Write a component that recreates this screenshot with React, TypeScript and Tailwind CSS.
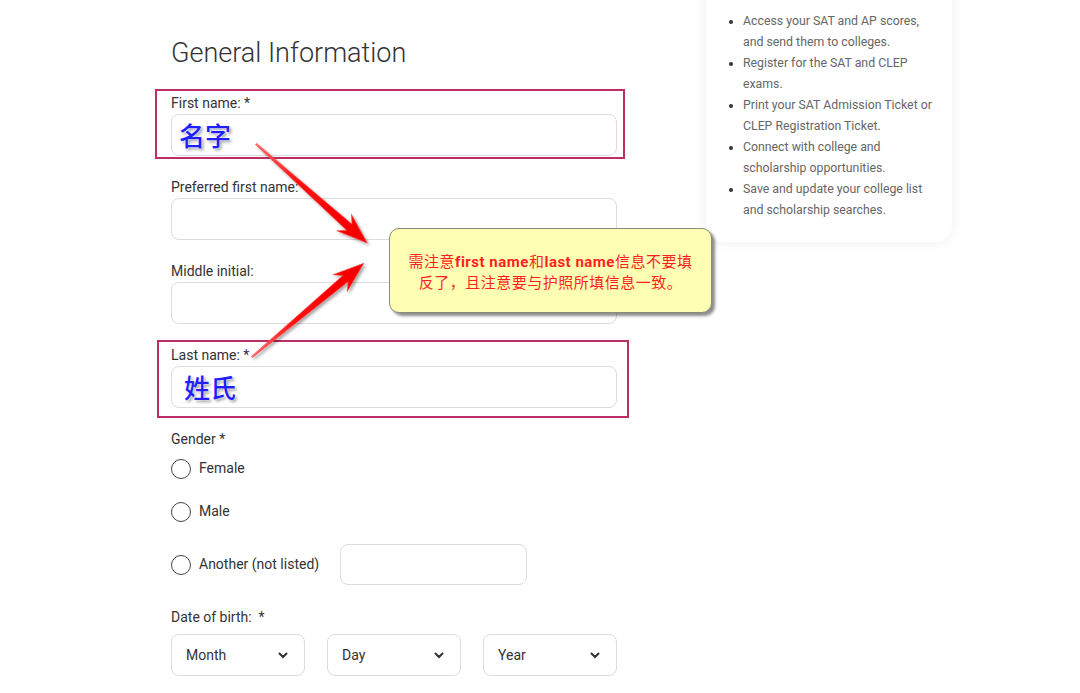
import { ReactNode } from "react";

const cjk = "font-['Noto_Sans_CJK_SC',sans-serif]";

// blue handwritten-style hint that sits inside the highlighted inputs
const Hint = ({ text, pad }: { text: string; pad: string }) => (
  <span
    className={`${cjk} ${pad} text-[26px] font-medium leading-[40px] text-[#1f1fff] [text-shadow:0_0_1px_#fff,0_0_2px_#fff,2px_2px_3px_#9a9a9a]`}
  >
    {text}
  </span>
);

type FieldProps = {
  label: string;
  children?: ReactNode;
  mark?: string;
};

const Field = ({ label, children, mark }: FieldProps) => (
  <div className="relative mb-[21px]">
    {mark && <div className={`pointer-events-none absolute border-2 border-[#bd2f64] ${mark}`} />}
    <label className="block text-[14px] leading-[20px] text-[#333]">{label}</label>
    <div className="mt-[1px] flex h-[42px] items-center rounded-lg border border-[#dcdcdc] bg-white">
      {children}
    </div>
  </div>
);

const Radio = ({ label, children }: { label: string; children?: ReactNode }) => (
  <div className="flex items-center">
    <span className="h-[20px] w-[20px] rounded-full border-[1.5px] border-[#444]" />
    <span className="ml-[8px] text-[14px] text-[#333]">{label}</span>
    {children}
  </div>
);

const Select = ({ label }: { label: string }) => (
  <div className="flex h-[42px] w-[134px] items-center justify-between rounded-lg border border-[#dcdcdc] pl-[14px] pr-[16px] text-[14px] text-[#333]">
    <span>{label}</span>
    <svg width="10" height="7" viewBox="0 0 10 7">
      <path d="M1.5 1.5l3.5 3.5 3.5-3.5" fill="none" stroke="#333" strokeWidth="2" strokeLinecap="round" />
    </svg>
  </div>
);

// tapered red pointer, drawn pointing right then rotated into place
const Arrow = ({ x, y, angle, len }: { x: number; y: number; angle: number; len: number }) => {
  const pts = `0,-0.8 ${len - 24},-4 ${len - 31},-11 ${len},0 ${len - 31},11 ${len - 24},4 0,0.8`;
  return (
    <g transform={`translate(${x} ${y}) rotate(${angle})`}>
      <polygon points={pts} fill="url(#arrowFill)" stroke="#ff4a4a" strokeWidth="0.6" strokeLinejoin="round" />
    </g>
  );
};

const perks = [
  ["Access your SAT and AP scores,", "and send them to colleges."],
  ["Register for the SAT and CLEP", "exams."],
  ["Print your SAT Admission Ticket or", "CLEP Registration Ticket."],
  ["Connect with college and", "scholarship opportunities."],
  ["Save and update your college list", "and scholarship searches."],
];

const App = () => {
  return (
    <div className="relative h-[693px] w-full overflow-hidden bg-white font-['Roboto',sans-serif]">
      <div className="flex">
        <main className="ml-[171px] w-[446px] pt-[36px]">
          <h2 className="text-[27px] font-light leading-[34px] text-[#333]">General Information</h2>

          <div className="mt-[23px]">
            <Field label="First name: *" mark="-left-[16px] -top-[4px] -right-[8px] -bottom-[3px]">
              <Hint text="名字" pad="pl-[7px]" />
            </Field>
            <Field label="Preferred first name:" />
            <Field label="Middle initial:" />
            <Field label="Last name: *" mark="-left-[14px] -top-[5px] -right-[12px] -bottom-[10px]">
              <Hint text="姓氏" pad="pl-[12px]" />
            </Field>
          </div>

          <div className="text-[14px] leading-[20px] text-[#333]">Gender *</div>
          <div className="mt-[9px] flex flex-col gap-[22px]">
            <Radio label="Female" />
            <Radio label="Male" />
            <Radio label="Another (not listed)">
              <div className="ml-[21px] h-[41px] w-[187px] rounded-lg border border-[#dcdcdc]" />
            </Radio>
          </div>

          <div className="mt-[22px] text-[14px] leading-[20px] text-[#333]">Date of birth:&nbsp; *</div>
          <div className="mt-[7px] flex gap-[22px]">
            <Select label="Month" />
            <Select label="Day" />
            <Select label="Year" />
          </div>
        </main>

        <aside className="ml-[89px] -mt-[20px] h-fit w-[246px] rounded-2xl bg-white pb-[21px] pl-[37px] pr-[12px] pt-[31px] shadow-[0_0_14px_rgba(0,0,0,0.07)]">
          <ul className="list-disc text-[12.3px] leading-[21px] text-[#666] marker:text-[#333]">
            {perks.map(([a, b]) => (
              <li key={a} className="whitespace-nowrap">
                {a}
                <br />
                {b}
              </li>
            ))}
          </ul>
        </aside>
      </div>

      {/* annotation arrows */}
      <svg className="pointer-events-none absolute inset-0 h-full w-full">
        <defs>
          <linearGradient id="arrowFill" x1="0" y1="0" x2="1" y2="0">
            <stop offset="0" stopColor="#ff6a6a" />
            <stop offset="0.4" stopColor="#ff0a0a" />
            <stop offset="1" stopColor="#f20000" />
          </linearGradient>
          <filter id="drop" x="-20%" y="-20%" width="140%" height="140%">
            <feDropShadow dx="2" dy="2" stdDeviation="1.6" floodColor="#000" floodOpacity="0.35" />
          </filter>
        </defs>
        <g filter="url(#drop)">
          <Arrow x={256} y={144} angle={41.7} len={149} />
          <Arrow x={252} y={357} angle={-40} len={146} />
        </g>
      </svg>

      {/* callout note */}
      <div className="absolute left-[389px] top-[228px] flex h-[85px] w-[323px] items-center justify-center rounded-[10px] border-[1.5px] border-[#8a8a7a] bg-[#ffffb4] shadow-[3px_3px_3px_rgba(0,0,0,0.45)]">
        <p className={`${cjk} text-center text-[15px] leading-[19px] tracking-[0.5px] text-[#ff1f1f]`}>
          需注意<b className="font-['Roboto',sans-serif]">first name</b>和<b className="font-['Roboto',sans-serif]">last name</b>信息不要填
          <br />
          反了，且注意要与护照所填信息一致。
        </p>
      </div>
    </div>
  );
};

export default App;
